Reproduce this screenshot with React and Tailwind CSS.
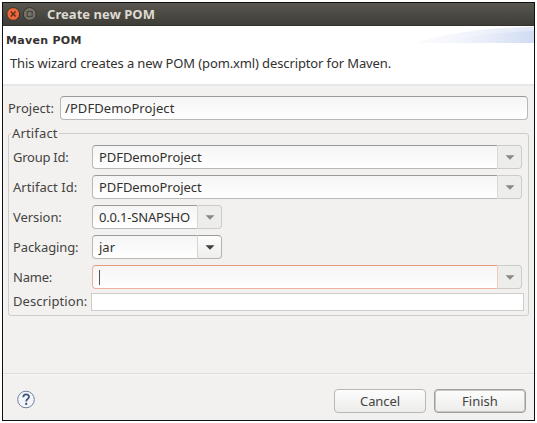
import React from "react";

const inputBg = "bg-gradient-to-b from-[#f5f5f5] to-[#ffffff]";

function Arrow({ dark }) {
  return (
    <svg width="10" height="5" viewBox="0 0 10 5" className="block">
      <path d="M0.5 0.3H9.5L5 4.8Z" fill={dark ? "#3f3e3b" : "#8b8984"} />
    </svg>
  );
}

function Combo({ value, width, valueClass, dark, focused, caret }) {
  return (
    <div className={`flex h-6 ${width}`}>
      <div
        className={`flex min-w-0 flex-1 items-center overflow-hidden whitespace-nowrap rounded-l-[4px] border border-r-0 pl-[6px] ${inputBg} ${
          focused ? "border-[#eeb19c] border-t-[#e59a80]" : "border-[#b9b8b6] border-t-[#9c9b99]"
        }`}
      >
        {caret ? (
          <span className="h-[15px] w-px bg-[#55534f]" />
        ) : (
          <span className={`pt-px leading-[21px] ${valueClass}`}>{value}</span>
        )}
      </div>
      <div
        className={`flex w-[25px] items-center justify-center rounded-r-[4px] border ${
          dark
            ? "border-[#b5b4b1] border-l-[#d5d4d2] border-t-[#9c9b99] bg-gradient-to-b from-[#fdfdfd] to-[#eeeeed]"
            : focused
              ? "border-[#cccbc8] border-l-[#f0cabc] bg-[#ededec]"
              : "border-[#cccbc8] border-l-[#d9d8d6] bg-[#ededec]"
        }`}
      >
        <Arrow dark={dark} />
      </div>
    </div>
  );
}

function Row({ label, labelClass, children }) {
  return (
    <div className="flex h-[30px] items-start">
      <div className="h-6 w-[79px] shrink-0 whitespace-nowrap leading-[25px] text-[#454441]">
        <span className={labelClass}>{label}</span>
      </div>
      {children}
    </div>
  );
}

export default function App() {
  return (
    <div className="h-[423px] w-[537px] overflow-hidden bg-white pl-[2px] pt-[2px] font-['Noto_Sans',sans-serif] text-[13px] text-[#32312f]">
      <div className="flex h-[419px] w-[533px] flex-col border border-[#111111] bg-[#f2f1f0]">
        <header className="flex h-[23px] shrink-0 items-center border-b border-[#33322e] bg-gradient-to-b from-[#59574f] to-[#3e3d38] pl-[3px]">
          <svg width="33" height="16" viewBox="0 0 33 16">
            <circle cx="7.2" cy="8" r="6.4" fill="#ee6639" stroke="#34332f" />
            <path d="M4.8 5.6L9.6 10.4M9.6 5.6L4.8 10.4" stroke="#57301f" strokeWidth="1.4" />
            <circle cx="23.7" cy="8" r="6.4" fill="#76746b" stroke="#34332f" />
            <rect x="21.2" y="5.5" width="5" height="5" fill="none" stroke="#45443e" strokeWidth="1.2" />
          </svg>
          <h1 className="ml-[8px] whitespace-nowrap text-[13px] font-bold leading-none tracking-[0.05px] text-[#dfdbd2]">Create new POM</h1>
        </header>

        <section className="flex h-[58px] shrink-0 bg-white">
          <div className="w-[412px] shrink-0 whitespace-nowrap">
            <h2 className="pl-[3px] pt-[8px] font-['DejaVu_Sans',sans-serif] text-[11px] font-bold leading-[14px] tracking-[0.3px] text-[#333230]">Maven POM</h2>
            <p className="pl-[7px] pt-[6px] leading-[18px] tracking-[-0.12px]">This wizard creates a new POM (pom.xml) descriptor for Maven.</p>
          </div>
          <svg width="119" height="18" viewBox="0 0 119 18" className="block">
            <defs>
              <linearGradient id="swoosh">
                <stop offset="0" stopColor="#f8f9fd" />
                <stop offset="0.5" stopColor="#e8edf9" />
                <stop offset="1" stopColor="#d0dbf3" />
              </linearGradient>
            </defs>
            <path d="M2 17C31 7 69 2 119 1V17Z" fill="url(#swoosh)" opacity="0.65" />
            <path d="M25 17C55 10 83 6 119 5V17Z" fill="url(#swoosh)" />
          </svg>
        </section>

        <main className="h-[289px] shrink-0 border-t-2 border-[#e8e7e6] pl-[5px] pt-[10px]">
          <div className="flex h-6">
            <span className="w-[52px] whitespace-nowrap leading-[25px] text-[#454441]">Project:</span>
            <div className={`h-6 w-[468px] rounded-[4px] border border-[#b9b8b6] border-t-[#9c9b99] pl-[4px] leading-[22px] ${inputBg}`}>
              <span className="tracking-[0.08px]">/PDFDemoProject</span>
            </div>
          </div>
          <fieldset className="mt-[5px] h-[191px] w-[521px] rounded-[3px] border border-[#cecdca] pl-[4px] pr-0">
            <legend className="-ml-[2px] h-4 whitespace-nowrap px-px leading-4 tracking-[0.15px] text-[#454441]">Artifact</legend>
            <div className="pt-[4px]">
              <Row label="Group Id:" labelClass="tracking-[-0.25px]">
                <Combo value="PDFDemoProject" width="w-[430px]" valueClass="tracking-[-0.06px]" />
              </Row>
              <Row label="Artifact Id:" labelClass="tracking-[0.05px]">
                <Combo value="PDFDemoProject" width="w-[430px]" valueClass="tracking-[-0.06px]" />
              </Row>
              <Row label="Version:" labelClass="tracking-[-0.05px]">
                <Combo value="0.0.1-SNAPSHO" width="w-[130px]" valueClass="tracking-[-0.2px]" />
              </Row>
              <Row label="Packaging:" labelClass="tracking-[-0.1px]">
                <Combo value="jar" width="w-[130px]" dark />
              </Row>
              <Row label="Name:" labelClass="tracking-[-0.2px]">
                <Combo width="w-[430px]" focused caret />
              </Row>
              <div className="-mt-[2px] flex h-[18px]">
                <span className="w-[78px] shrink-0 whitespace-nowrap leading-[17px] tracking-[0.08px] text-[#454441]">Description:</span>
                <div className="h-[18px] w-[433px] border border-[#cecdca] bg-white" />
              </div>
            </div>
          </fieldset>
        </main>

        <footer className="flex flex-1 items-start border-t border-[#dddcda] pl-[14px] pt-[15px] shadow-[inset_0_1px_0_#f9f8f8]">
          <svg width="19" height="23" viewBox="0 0 19 23" className="mr-[298px] shrink-0">
            <circle cx="9" cy="10.5" r="8.3" fill="#f5f6f8" stroke="#6e819f" />
            <path d="M6.3 8.2C6.3 4.3 12 4.6 12 7.8C12 10 9.2 9.8 9.2 12.6" fill="none" stroke="#3d5680" strokeWidth="1.8" />
            <rect x="8.2" y="13.8" width="2" height="2.1" fill="#3d5680" />
          </svg>
          <button className="h-6 w-[92px] rounded-[4px] border border-[#b9b7b4] bg-gradient-to-b from-[#fdfdfd] to-[#ececeb] leading-[22px] tracking-[-0.1px] text-[#454340]">Cancel</button>
          <button className="ml-[8px] h-6 w-[92px] rounded-[4px] border border-[#a09e9b] bg-gradient-to-b from-[#fdfdfd] to-[#ececeb] leading-[22px] text-[#454340] shadow-[inset_0_0_0_1px_#c9c8c5]">Finish</button>
        </footer>
      </div>
    </div>
  );
}
